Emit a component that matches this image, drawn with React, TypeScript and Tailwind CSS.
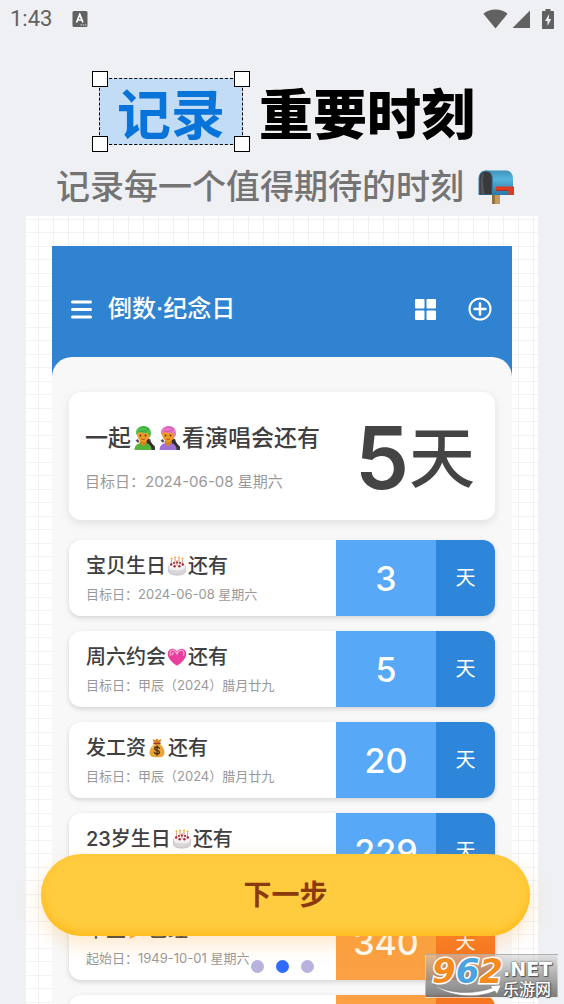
import { useState } from 'react';
import clsx from 'clsx';

type EmojiName = 'cake' | 'heart' | 'money' | 'party';

interface Countdown {
  id: number;
  before: string;
  emoji: EmojiName;
  after: string;
  date: string;
  days: number;
  past?: boolean;
}

const countdowns: Countdown[] = [
  { id: 1, before: '宝贝生日', emoji: 'cake', after: '还有', date: '目标日：2024-06-08 星期六', days: 3 },
  { id: 2, before: '周六约会', emoji: 'heart', after: '还有', date: '目标日：甲辰（2024）腊月廿九', days: 5 },
  { id: 3, before: '发工资', emoji: 'money', after: '还有', date: '目标日：甲辰（2024）腊月廿九', days: 20 },
  { id: 4, before: '23岁生日', emoji: 'cake', after: '还有', date: '目标日：2024-06-08 星期六', days: 229 },
  { id: 5, before: '毕业', emoji: 'party', after: '已经', date: '起始日：1949-10-01 星期六', days: 340, past: true },
];

function CakeIcon() {
  return (
    <svg viewBox="0 0 20 20" className="size-5">
      <path d="M1.5 9v6.5c0 2 3.6 3.7 8.5 3.7s8.5-1.700 8.500-3.700V9z" fill="#d9d6da" />
      <path d="M1.500 12.500c2 2.600 15 2.600 17 0V9h-17z" fill="#efedf0" />
      <ellipse cx="10" cy="9" rx="8.500" ry="4" fill="#f7f3f5" />
      <g stroke="#d7a98a" strokeWidth="1.200">
        <path d="M4.500 3.500v5M8 2.500v4M12 2.500v4M15.500 3.500v5M10 4v6" />
      </g>
      <g fill="#f6a53a">
        <circle cx="4.500" cy="2.500" r="1" />
        <circle cx="8" cy="1.500" r="1" />
        <circle cx="12" cy="1.500" r="1" />
        <circle cx="15.500" cy="2.500" r="1" />
      </g>
      <g fill="#a3283f">
        <circle cx="4.200" cy="8.500" r="1.200" />
        <circle cx="7" cy="7" r="1.100" />
        <circle cx="10" cy="6.500" r="1.100" />
        <circle cx="13" cy="7" r="1.100" />
        <circle cx="15.800" cy="8.500" r="1.200" />
        <circle cx="7.600" cy="10.300" r="1.200" />
        <circle cx="12.400" cy="10.300" r="1.200" />
      </g>
      <path d="M1.600 10v5.500c0 2 3.600 3.600 8.400 3.600s8.400-1.600 8.400-3.600V10" fill="none" stroke="#bdb9bf" strokeWidth="0.700" />
    </svg>
  );
}

function HeartIcon() {
  return (
    <svg viewBox="0 0 20 20" className="size-5">
      <path
        d="M10 18.800C5 15.200.8 11.500.8 6.900.8 3.900 2.900 1.700 5.500 1.700c1.900 0 3.500 1 4.500 2.700 1-1.700 2.600-2.700 4.500-2.700 2.600 0 4.700 2.200 4.700 5.200 0 4.600-4.200 8.300-9.200 11.900z"
        fill="#e83f9d"
      />
      <path
        d="M3.300 8c-.6-3 .6-4.800 2.400-4.800 2 0 3.300 1.600 4.300 3.700 1-2.100 2.300-3.700 4.300-3.700 1.800 0 3 1.800 2.400 4.800"
        fill="none"
        stroke="#fba6d5"
        strokeWidth="1.300"
        strokeLinecap="round"
      />
      <path d="M5 8c0-1.500.6-2.200 1.500-2.200" fill="none" stroke="#ffe0f1" strokeWidth="1" strokeLinecap="round" />
    </svg>
  );
}

function MoneyIcon() {
  return (
    <svg viewBox="0 0 20 20" className="size-5">
      <path d="M5.500 1l2.500 1L10 .8l2 1.200 2.500-1-1.700 4.800H7.200z" fill="#d58a24" />
      <path d="M7.500 5.500h5c3 2.600 5 6 5 9.200 0 3-2 4.600-7.500 4.600s-7.500-1.600-7.500-4.600c0-3.200 2-6.600 5-9.200z" fill="#e8a33a" />
      <path d="M5 10c.8-1.800 1.800-3 3-3.900" fill="none" stroke="#f8cd7c" strokeWidth="1.200" strokeLinecap="round" />
      <path d="M7 5.500h6" stroke="#a8342a" strokeWidth="1.500" strokeLinecap="round" />
      <path
        d="M12.400 10.300c-.4-.9-1.300-1.300-2.400-1.300-1.300 0-2.300.6-2.300 1.700 0 2.500 4.800 1 4.800 3.500 0 1.100-1.100 1.800-2.500 1.800-1.300 0-2.300-.6-2.600-1.600M10 7.800v9.400"
        fill="none"
        stroke="#4a2f10"
        strokeWidth="1.300"
        strokeLinecap="round"
      />
    </svg>
  );
}

function PartyIcon() {
  return (
    <svg viewBox="0 0 20 20" className="size-5">
      <path d="M2 19L6.500 7l7 7z" fill="#f0a92e" />
      <path d="M9 7c0-2 1-3.500 3-4.500M13 11c2-1 4-1 5.500.5" fill="none" stroke="#e3465c" strokeWidth="1.500" />
      <circle cx="15" cy="6" r="1.300" fill="#3f8ee8" />
      <circle cx="6" cy="3" r="1.200" fill="#51b765" />
    </svg>
  );
}

function SingerIcon({ hair, shade, shirt }: { hair: string; shade: string; shirt: string }) {
  return (
    <svg viewBox="0 0 24 28" className="h-7 w-6">
      <path d="M14 14l4 1c1 4 3 6 5 7.500V26h-9z" fill="#3a3a40" />
      <path d="M2.500 26c0-4.500 3-6.500 6-7h5c3.500.5 6 2.500 6 7z" fill={shirt} />
      <path d="M7.500 18.500l3.500 4 4-4-1-3H8.500z" fill="#d98318" />
      <path d="M5 9c0-3 3-4.500 6-4.500S17.500 7 17.500 10c0 4.500-2.800 8-6 8S5 14.500 5 9z" fill="#ee9a24" />
      <path d="M4.500 11C2.500 6 6.500 2 11.500 2 16 2 19 5 19 9c0 2-.6 3.600-1.700 5-.1-2.400-.8-4.200-2.300-5.300-3 .6-5.500.3-7.500-1C6 8.500 5.200 9.500 4.500 11z" fill={hair} />
      <path d="M7 7C10 8 14 7.500 17 4.500M9 3.500c2-.8 5-.5 7 1" fill="none" stroke={shade} strokeWidth="0.800" />
      <circle cx="8.500" cy="11.500" r="0.900" fill="#5b3210" />
      <circle cx="13.500" cy="11.500" r="0.900" fill="#5b3210" />
      <path d="M9.500 15c1 .7 2.200.7 3.200 0" fill="none" stroke="#b2402c" strokeWidth="1" />
      <path d="M3.500 16.500l2-1.500 2 2-1.500 2z" fill="#55565c" />
      <path d="M15.500 16l5.500 7" stroke="#2b2b30" strokeWidth="2" />
    </svg>
  );
}

function MailboxIcon() {
  return (
    <svg viewBox="0 0 36 36" className="size-9 shrink-0">
      <defs>
        <linearGradient id="mailboxBody" x1="0" y1="0" x2="0" y2="1">
          <stop offset="0" stopColor="#3f93bd" />
          <stop offset="0.35" stopColor="#55b4dc" />
          <stop offset="1" stopColor="#2878a8" />
        </linearGradient>
      </defs>
      <path d="M14 24h8v11h-8z" fill="#c29a62" />
      <path d="M14 26h3v9h-3z" fill="#94713f" />
      <path d="M7 1.500h21c4.500 0 7 3.500 7 8.500v16H13z" fill="url(#mailboxBody)" />
      <path d="M.5 26V10c0-5.500 3-8.500 7.300-8.500S15 4.500 15 10v16z" fill="#3580a8" />
      <path d="M1.500 25.500V10c0-4.800 2.500-7.500 6.300-7.500S13.800 5.200 13.800 10v15.500z" fill="#37393d" />
      <path d="M2.500 25V11c0-4 1.500-6.500 3.500-7.500C4.800 8 5 19 7 25z" fill="#505358" />
      <path d="M18 17.500h18V26h-5.500v-4.500H18z" fill="#dd3b22" />
      <path d="M18 21.500h12.500" stroke="#a32817" strokeWidth="0.800" />
    </svg>
  );
}

const emojis = {
  cake: CakeIcon,
  heart: HeartIcon,
  money: MoneyIcon,
  party: PartyIcon,
};

function StatusBar() {
  return (
    <div className="flex h-[38px] shrink-0 items-center px-[10px] text-[#616161]">
      <span className="font-['Roboto',sans-serif] text-[22px] leading-6">1:43</span>
      <svg viewBox="0 0 16 16" className="ml-5 size-4">
        <rect x="0.500" y="0" width="15" height="16" rx="1.500" fill="currentColor" />
        <path d="M4.500 11.500L7.800 3.500l3.200 8M5.800 9h4" fill="none" stroke="#fff" strokeWidth="1.700" />
        <path d="M8.500 14h6" stroke="#ddd" strokeWidth="1" strokeDasharray="1.500 0.700" />
      </svg>
      <svg viewBox="0 0 25 20" className="ml-auto h-5 w-[25px]">
        <path d="M12.500 19.500L.4 4.700C7.500-.8 17.500-.8 24.600 4.700z" fill="currentColor" />
      </svg>
      <svg viewBox="0 0 18 18" className="ml-1 size-[18px]">
        <path d="M18 .5V18H.5z" fill="currentColor" />
      </svg>
      <svg viewBox="0 0 12 20" className="ml-3 h-5 w-3">
        <path d="M3.500 0h5v2H11c.6 0 1 .4 1 1v16c0 .6-.4 1-1 1H1c-.6 0-1-.4-1-1V3c0-.6.4-1 1-1h2.500z" fill="currentColor" />
        <path d="M7.200 5L3 12h2.500v5L9.200 10H6.800z" fill="#eef0f3" />
      </svg>
    </div>
  );
}

function SelectedWord({ children }: { children: string }) {
  return (
    <div className="relative flex h-[67px] items-center border border-dashed border-black bg-[#c3dcf5] px-[17px] leading-[60px] text-[#0873d8]">
      {children}
      <span className="absolute -top-2 -left-2 size-4 border border-black bg-white" />
      <span className="absolute -top-2 -right-2 size-4 border border-black bg-white" />
      <span className="absolute -bottom-2 -left-2 size-4 border border-black bg-white" />
      <span className="absolute -right-2 -bottom-2 size-4 border border-black bg-white" />
    </div>
  );
}

function AppHeader() {
  return (
    <header className="flex h-[111px] shrink-0 items-center pt-[15px] pr-5 pl-[19px] text-white">
      <button type="button" aria-label="菜单">
        <svg viewBox="0 0 21 19" className="h-[19px] w-[21px]">
          <path d="M1.500 2h18M1.500 9.500h18M1.500 17h18" stroke="currentColor" strokeWidth="3" strokeLinecap="round" />
        </svg>
      </button>
      <h2 className="ml-4 text-[24px] leading-8 font-medium">倒数·纪念日</h2>
      <button type="button" aria-label="视图" className="ml-auto">
        <svg viewBox="0 0 21 21" className="size-[21px]" fill="currentColor">
          <rect x="0" y="0" width="9.500" height="9.500" rx="1" />
          <rect x="11.500" y="0" width="9.500" height="9.500" rx="1" />
          <rect x="0" y="11.500" width="9.500" height="9.500" rx="1" />
          <rect x="11.500" y="11.500" width="9.500" height="9.500" rx="1" />
        </svg>
      </button>
      <button type="button" aria-label="添加" className="ml-8">
        <svg viewBox="0 0 24 24" className="size-6" fill="none" stroke="currentColor">
          <circle cx="12" cy="12" r="10.500" strokeWidth="2" />
          <path d="M6.500 12h11M12 6.500v11" strokeWidth="2.500" strokeLinecap="round" />
        </svg>
      </button>
    </header>
  );
}

function HeroCard() {
  return (
    <article className="flex h-32 shrink-0 items-center justify-between rounded-xl bg-white pt-1 pr-5 pl-4 shadow-[0_3px_10px_rgba(0,0,0,0.1)]">
      <div className="flex flex-col gap-4 whitespace-nowrap">
        <h3 className="flex items-center gap-px text-[23px] leading-8 font-medium text-[#404040]">
          一起
          <SingerIcon hair="#4fc04f" shade="#2f9a3c" shirt="#57b43b" />
          <SingerIcon hair="#ea74c4" shade="#c24e9e" shirt="#a06fd6" />
          看演唱会还有
        </h3>
        <p className="text-[15px] leading-6 text-[#999999]">目标日：2024-06-08 星期六</p>
      </div>
      <p className="flex items-center text-[#444444]">
        <span className="text-[86px] leading-[96px] font-semibold">5</span>
        <span className="text-[66px] leading-[96px] font-medium">天</span>
      </p>
    </article>
  );
}

function CountdownRow({ item }: { item: Countdown }) {
  const Emoji = emojis[item.emoji];

  return (
    <li className="flex h-[76px] shrink-0 overflow-hidden rounded-xl bg-white shadow-[0_2px_5px_rgba(0,0,0,0.15)]">
      <div className="flex min-w-0 flex-1 flex-col justify-center gap-1 pl-[17px] whitespace-nowrap">
        <h3 className="flex items-center gap-px text-[20px] leading-7 font-medium text-[#404040]">
          {item.before}
          <Emoji />
          {item.after}
        </h3>
        <p className="text-[13px] leading-5 text-[#999999]">{item.date}</p>
      </div>
      <div
        className={clsx(
          'flex w-[100px] items-center justify-center text-[34px] font-medium text-white',
          item.past ? 'bg-[#fba143]' : 'bg-[#57a8f7]'
        )}
      >
        {item.days}
      </div>
      <div
        className={clsx(
          'flex w-[59px] items-center justify-center text-[20px] text-white',
          item.past ? 'bg-[#f67722]' : 'bg-[#2e86da]'
        )}
      >
        天
      </div>
    </li>
  );
}

function EmptyRow() {
  return (
    <li className="flex h-[76px] shrink-0 overflow-hidden rounded-xl bg-white shadow-[0_2px_5px_rgba(0,0,0,0.15)]">
      <div className="flex-1" />
      <div className="w-[100px] bg-[#fba143]" />
      <div className="w-[59px] bg-[#f67722]" />
    </li>
  );
}

function Watermark() {
  return (
    <div className="absolute right-[6px] bottom-[6px] h-11 w-[133px] border border-white/40 bg-linear-to-b from-[#d0d0d0]/50 to-[#6f6f6f]/90 font-['DejaVu_Sans',sans-serif] font-bold">
      <div className="flex pl-[6px]">
        <div className="text-[34px] leading-[32px] italic [-webkit-text-stroke:3px_#ffffff] [paint-order:stroke_fill]">
          <span className="text-[#f58a1f]">9</span>
          <span className="text-[#4ba3e0]">6</span>
          <span className="text-[#f58a1f]">2</span>
        </div>
        <div className="pt-1 text-white [text-shadow:0_0_2px_#444444,1px_1px_1px_#555555]">
          <div className="text-[19px] leading-5">.NET</div>
          <div className="font-['Noto_Sans_CJK_SC',sans-serif] text-[16px] leading-[18px] font-medium">乐游网</div>
        </div>
      </div>
      <svg viewBox="0 0 70 14" className="absolute bottom-0 left-[6px] h-[14px] w-[70px]">
        <path d="M1 1c14 10 40 11 59 4l-2-2 11-1-4 9-2-3C45 16 15 14 1 1z" fill="#fff" stroke="#777" strokeWidth="0.500" />
      </svg>
    </div>
  );
}

export default function App() {
  const [page, setPage] = useState(1);

  return (
    <div className="relative flex h-screen flex-col overflow-hidden bg-[#eff0f3] font-['Inter','Noto_Sans_CJK_SC',sans-serif]">
      <StatusBar />

      {/* Title */}
      <h1 className="mt-10 flex shrink-0 items-center justify-center gap-4 pl-[10px] font-['Noto_Sans_CJK_SC',sans-serif] text-[54px] leading-[60px] font-bold whitespace-nowrap text-black">
        <SelectedWord>记录</SelectedWord>
        <span className="font-black">重要时刻</span>
      </h1>
      <p className="flex h-[71px] shrink-0 items-center justify-center gap-[14px] pt-3 pl-[6px] text-[34px] leading-10 font-medium whitespace-nowrap text-[#747474]">
        记录每一个值得期待的时刻
        <MailboxIcon />
      </p>

      {/* Preview on squared paper */}
      <main className="mx-[26px] flex min-h-0 flex-1 flex-col bg-white bg-[linear-gradient(90deg,#f1f1f3_1px,transparent_1px),linear-gradient(transparent_13px,#f3f3f5_13px,#f3f3f5_14px,transparent_14px,transparent_26px,#f3f3f5_26px)] bg-[size:15px_100%,100%_27px] bg-[position:12px_0,0_-10px] px-[26px] pt-[30px]">
        <section className="flex min-h-0 flex-1 flex-col bg-[#3083d0]">
          <AppHeader />
          <div className="flex min-h-0 flex-1 flex-col gap-5 overflow-hidden rounded-t-[20px] bg-[#f8f8f9] px-[17px] pt-[35px]">
            <HeroCard />
            <ul className="flex flex-col gap-[15px]">
              {countdowns.map((item) => (
                <CountdownRow key={item.id} item={item} />
              ))}
              <EmptyRow />
            </ul>
          </div>
        </section>
      </main>

      {/* Next step + pager */}
      <div className="absolute inset-x-0 bottom-0 flex flex-col items-center pb-[31px]">
        <div className="w-full pr-[34px] pl-[41px]">
          <button
            type="button"
            onClick={() => setPage((page + 1) % 3)}
            className="h-[82px] w-full rounded-full bg-[#ffcc40] text-[28px] font-bold text-[#8a3a0c] shadow-[inset_0_-4px_10px_#ffba1c,0_8px_20px_rgba(255,160,40,0.25)]"
          >
            下一步
          </button>
        </div>
        <div className="mt-6 flex gap-3">
          {[0, 1, 2].map((i) => (
            <span key={i} className={clsx('size-[13px] rounded-full', i === page ? 'bg-[#2f6bff]' : 'bg-[#b8b2de]')} />
          ))}
        </div>
      </div>

      <Watermark />
    </div>
  );
}
